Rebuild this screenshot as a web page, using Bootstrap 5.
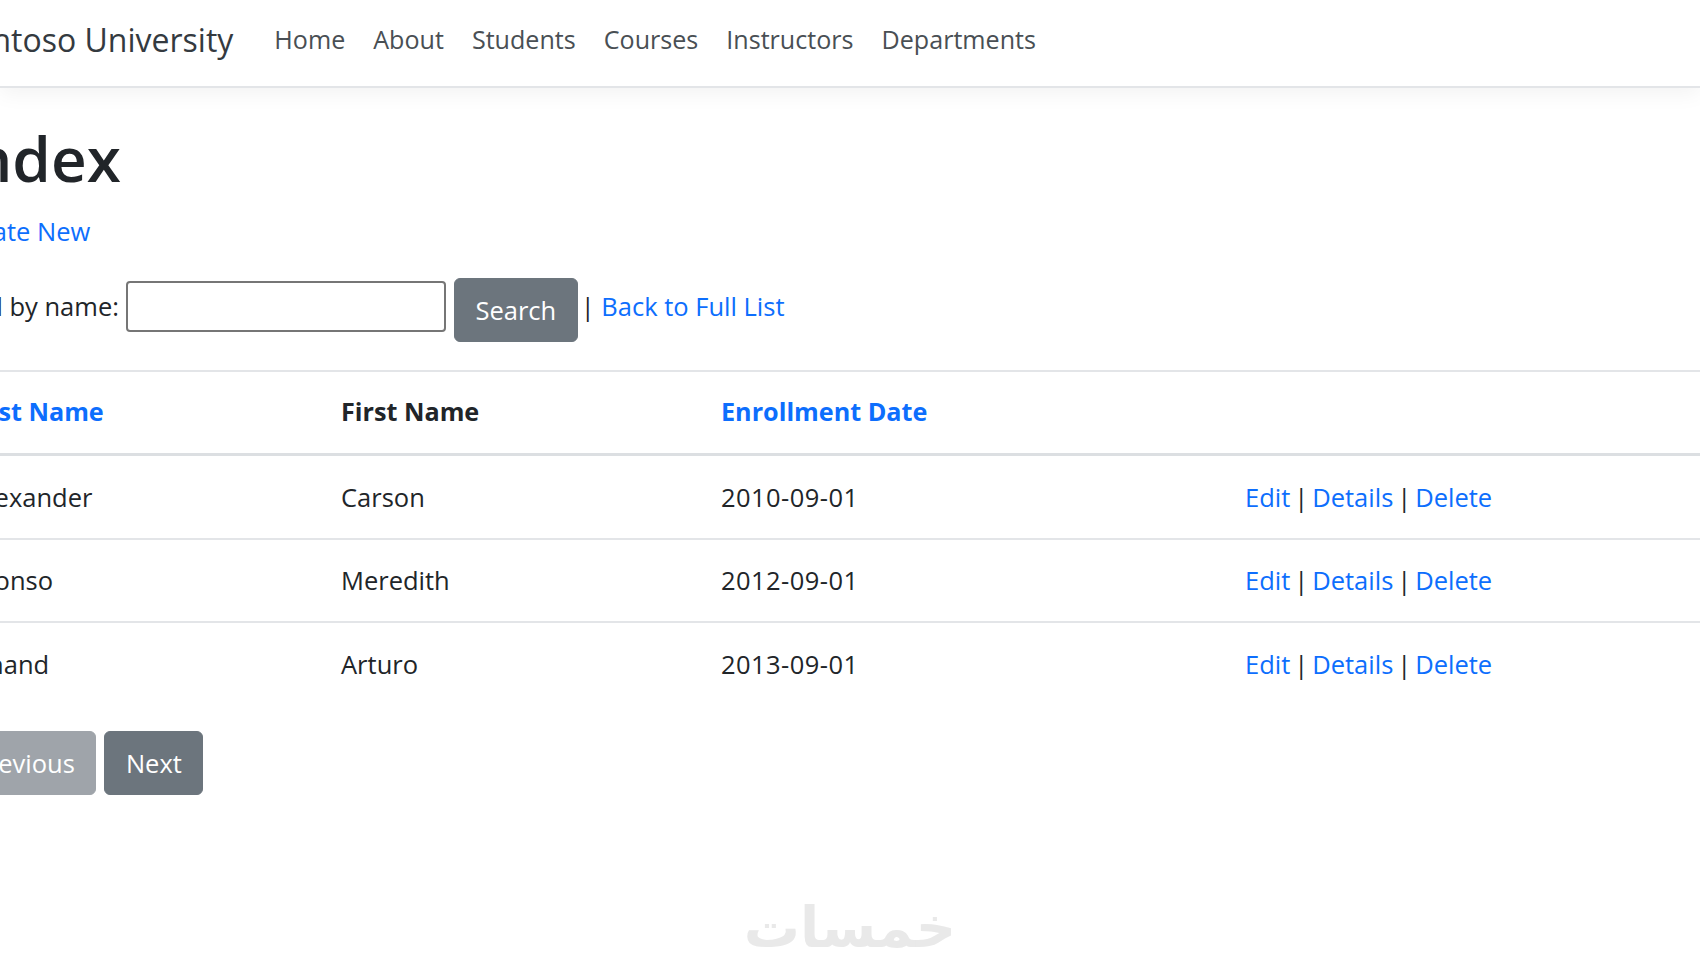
<!DOCTYPE html>
<html lang="en">
<head>
<meta charset="utf-8">
<title>Students - Contoso University</title>
<link href="https://cdn.jsdelivr.net/npm/bootstrap@5.3.0/dist/css/bootstrap.min.css" rel="stylesheet">
<style>
html,body{height:970px;overflow:hidden}
body{font-family:"Open Sans","Liberation Sans",sans-serif;font-size:25.5px;color:#212529;background:#fff;position:relative}
.topbar{height:88px;border-bottom:2px solid #e3e5e8;box-shadow:0 6px 20px rgba(0,0,0,.05);padding:0}
.shift{margin-left:-44px;width:1800px}
.topbar .shift{display:flex;align-items:center;height:74px;margin-bottom:6px}
.brandname{font-size:32px;color:#343a40;margin-left:-4px;margin-right:41px;text-decoration:none;white-space:nowrap}
.topbar .nav-link{font-size:25.1px;color:#494f54;padding:0;margin-right:28px}
.pagehead{font-size:62px;font-weight:600;line-height:1;margin:39px 0 0 -2px}
.createrow{margin:25px 0 0 -4px;line-height:34px}
a{color:#0d6efd;text-decoration:none}
.searchrow{display:flex;align-items:flex-start;margin:30px 0 0 -4px;white-space:nowrap}
.searchrow label{line-height:34px;margin-top:11px}
.findinput{width:320px;height:51px;border:2px solid #767676;border-radius:4px;margin:3px 8px 0 7px;background:#fff}
.btn.pagebtn{background:#6c757d;border-color:#6c757d;color:#fff;font-size:25.5px;padding:0 20.5px;height:64px;line-height:62px;border-radius:6px}
.btn.pagebtn.disabled{opacity:.65;background:#6c757d;border-color:#6c757d;color:#fff}
.backlink{margin:11px 0 0 3px;line-height:34px}
.datatable{table-layout:fixed;width:1800px;margin:28px 0 0 0;border-top:2px solid #e3e5e8}
.datatable th,.datatable td{padding:0 13px;height:83px;vertical-align:middle;border-bottom:2px solid #e3e5e8;color:#212529}
.datatable thead th{height:83px;border-bottom:3px solid #dcdfe2;font-weight:700;font-size:25.2px}
.datatable tbody tr:first-child td{height:85px}
.datatable tbody tr:last-child td{border-bottom:0}
.datatable tbody td:first-child{padding-left:16px}
.datatable th a{color:#0d6efd}
.datecell{letter-spacing:.45px}
.actionscell{word-spacing:-2.7px;color:#212529}
.collast{width:372px}.colfirst{width:380px}.coldate{width:524px}
.pager{margin:26px 0 0 -5px;display:flex;gap:8px}
.logotext{position:absolute;left:751px;top:888px;width:205px;text-align:center;font-family:"DejaVu Sans",sans-serif;font-weight:700;font-size:56px;line-height:80px;color:#e9e9e9;white-space:nowrap}
</style>
</head>
<body>
<nav class="navbar topbar">
  <div class="shift">
    <a class="brandname" href="#">Contoso University</a>
    <ul class="navbar-nav flex-row">
      <li class="nav-item"><a class="nav-link" href="#">Home</a></li>
      <li class="nav-item"><a class="nav-link" href="#">About</a></li>
      <li class="nav-item"><a class="nav-link" href="#">Students</a></li>
      <li class="nav-item"><a class="nav-link" href="#">Courses</a></li>
      <li class="nav-item"><a class="nav-link" href="#">Instructors</a></li>
      <li class="nav-item"><a class="nav-link" href="#">Departments</a></li>
    </ul>
  </div>
</nav>
<main class="shift">
  <h1 class="pagehead">Index</h1>
  <p class="createrow"><a href="#">Create New</a></p>
  <form class="searchrow">
    <label for="q">Find by name:</label>
    <input id="q" class="findinput" type="text">
    <button type="button" class="btn pagebtn">Search</button>
    <span class="backlink">| <a href="#">Back to Full List</a></span>
  </form>
  <table class="table datatable">
    <thead>
      <tr>
        <th class="collast"><a href="#">Last Name</a></th>
        <th class="colfirst">First Name</th>
        <th class="coldate"><a href="#">Enrollment Date</a></th>
        <th></th>
      </tr>
    </thead>
    <tbody>
      <tr><td>Alexander</td><td>Carson</td><td class="datecell">2010-09-01</td><td class="actionscell"><a href="#">Edit</a> | <a href="#">Details</a> | <a href="#">Delete</a></td></tr>
      <tr><td>Alonso</td><td>Meredith</td><td class="datecell">2012-09-01</td><td class="actionscell"><a href="#">Edit</a> | <a href="#">Details</a> | <a href="#">Delete</a></td></tr>
      <tr><td>Anand</td><td>Arturo</td><td class="datecell">2013-09-01</td><td class="actionscell"><a href="#">Edit</a> | <a href="#">Details</a> | <a href="#">Delete</a></td></tr>
    </tbody>
  </table>
  <div class="pager">
    <a class="btn pagebtn disabled" href="#">Previous</a>
    <a class="btn pagebtn" href="#">Next</a>
  </div>
</main>
<div class="logotext" dir="rtl" lang="ar">خمسات</div>
</body>
</html>
